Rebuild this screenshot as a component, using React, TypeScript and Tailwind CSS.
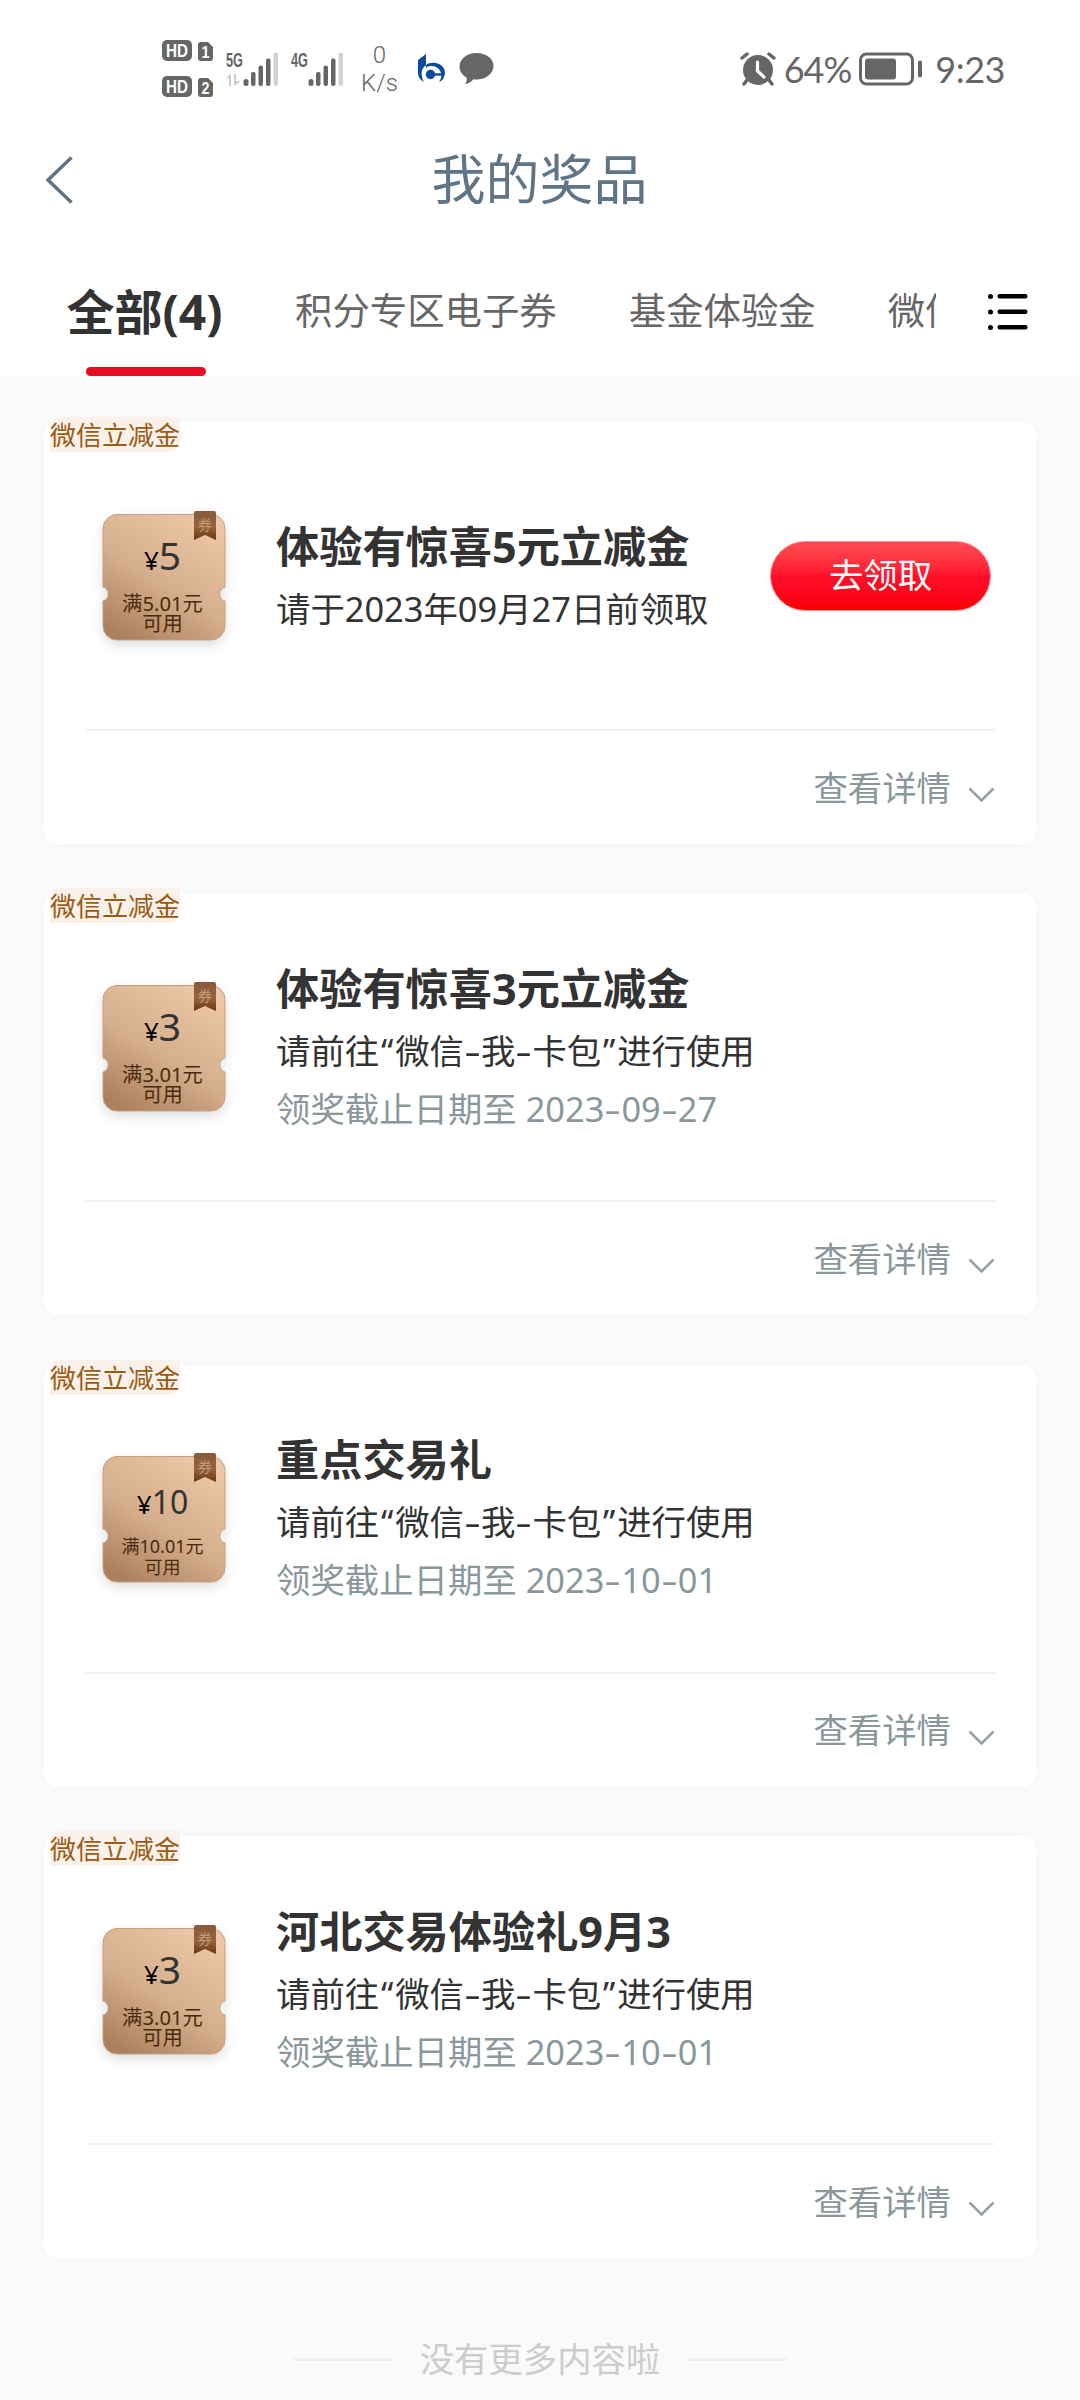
import clsx from 'clsx';

interface Prize {
  title: string;
  desc: string;
  deadline?: string;
  amount: string;
  limit: string;
  small?: boolean;
  claimable?: boolean;
}

const prizes: Prize[] = [
  {
    title: '体验有惊喜5元立减金',
    desc: '请于2023年09月27日前领取',
    amount: '5',
    limit: '满5.01元',
    claimable: true,
  },
  {
    title: '体验有惊喜3元立减金',
    desc: '请前往“微信-我-卡包”进行使用',
    deadline: '领奖截止日期至 2023-09-27',
    amount: '3',
    limit: '满3.01元',
  },
  {
    title: '重点交易礼',
    desc: '请前往“微信-我-卡包”进行使用',
    deadline: '领奖截止日期至 2023-10-01',
    amount: '10',
    limit: '满10.01元',
    small: true,
  },
  {
    title: '河北交易体验礼9月3',
    desc: '请前往“微信-我-卡包”进行使用',
    deadline: '领奖截止日期至 2023-10-01',
    amount: '3',
    limit: '满3.01元',
  },
];

const tabs = ['积分专区电子券', '基金体验金', '微信立减金'];

// Hyphens and quotes take more room than the font gives them
function Spaced({ text }: { text: string }) {
  return (
    <>
      {text.split(/([-“”])/).map((part, i) => {
        if (part === '-') {
          return <span key={i} className="inline-block w-[17px] scale-x-150 text-center">-</span>;
        }
        if (part === '“' || part === '”') {
          return <span key={i} className="inline-block w-[16px] text-center">{part}</span>;
        }
        return part;
      })}
    </>
  );
}

function SimBadges() {
  return (
    <svg className="overflow-visible" width="52" height="58" viewBox="0 0 52 58" fill="#666" fontFamily="'Liberation Sans', sans-serif" fontWeight="bold">
      {[0, 36].map((y, i) => (
        <g key={y} transform={`translate(0 ${y})`}>
          <rect x="0" y="0" width="30" height="21" rx="5" />
          <text x="4" y="17" fontSize="18" fill="#fff" textLength="22" lengthAdjust="spacingAndGlyphs">HD</text>
          <path d="M39 2h7l5 5v11a3 3 0 0 1-3 3h-9a3 3 0 0 1-3-3V5a3 3 0 0 1 3-3z" />
          <text x="39.5" y="18" fontSize="17" fill="#fff" textLength="8" lengthAdjust="spacingAndGlyphs">{i + 1}</text>
        </g>
      ))}
    </svg>
  );
}

function Signal({ label, arrows }: { label: string; arrows?: boolean }) {
  return (
    <svg className="overflow-visible" width="53" height="34" viewBox="0 0 53 34" fill="#666">
      <text x="0" y="15" fontSize="21" fontWeight="bold" fontFamily="'Liberation Sans', sans-serif" textLength={17} lengthAdjust="spacingAndGlyphs">{label}</text>
      {arrows && <path d="M0 26.500l5-5V34H3v-7.500zM8 22h2v7h5l-7 5z" fill="#ccc" />}
      <rect x="17.500" y="27" width="5" height="7" rx="2.500" />
      <rect x="25" y="20" width="4.500" height="14" rx="2" />
      <rect x="32.500" y="13.500" width="4.500" height="20.500" rx="2" />
      <rect x="40" y="6.500" width="4.500" height="27.500" rx="2" />
      <rect x="47.500" y="0.500" width="4.500" height="33.500" rx="2" fill="#d2d2d2" />
    </svg>
  );
}

function StatusBar() {
  return (
    <div className="flex h-[137px] items-center pr-[75px] pl-[162px] text-[#666]">
      <SimBadges />
      <div className="ml-[12px] flex gap-[12px]">
        <Signal label="5G" arrows />
        <Signal label="4G" />
      </div>
      <div className="ml-[17px] flex flex-col items-center font-[Roboto] text-[24px] leading-[28px] font-light">
        <span>0</span>
        <span>K/s</span>
      </div>
      <svg className="ml-[20px]" width="28" height="30" viewBox="0 0 28 30" fill="#0e4a9b">
        <path d="M0 6L8 0v11C4 14 3 18 4 22c0 3 1 4 2 6-4-2-6-5-6-9z" />
        <path d="M8 11c3-3 10-3 14-.5 5 3 6 8 4 12.500-1 3-3 4-5 5 2-3 3-6 2-9-1-4-5-7-9-7-3 0-5 .5-6 2z" />
        <circle cx="12.500" cy="20.500" r="4.700" />
        <path d="M14 19.300h12v2.400H14z" />
      </svg>
      <svg className="ml-[13px]" width="35" height="33" viewBox="0 0 35 33" fill="#666">
        <path d="M17.500 1C27 1 34.500 6.500 34.500 14S27 27.500 17.500 27.500c-1 0-2 0-3-.2-2 2.500-5 4.500-8.500 4.700 1.500-2 2-4 1.500-6.500C3 23 .5 19 .5 14.500.5 7 8 1 17.500 1z" />
      </svg>
      <div className="ml-auto flex items-center font-[Lato] text-[36px] leading-none">
        <svg width="36" height="34" viewBox="0 0 36 34" fill="none" stroke="#666" strokeLinecap="round">
          <circle cx="18" cy="18" r="15" fill="#666" stroke="none" />
          <path d="M2 6l5-4M34 6l-5-4M7 28l-3 4M29 28l3 4" strokeWidth="3.500" />
          <path d="M17.500 10v9l6.500 6" stroke="#fff" strokeWidth="3.200" />
        </svg>
        <span className="ml-[8px] tracking-[-1px]">64%</span>
        <svg className="ml-[8px]" width="64" height="34" viewBox="0 0 64 34" fill="#666">
          <rect x="1.500" y="2" width="52" height="30" rx="6" fill="none" stroke="#666" strokeWidth="3" />
          <rect x="6" y="6.500" width="31" height="21" rx="3" />
          <rect x="59" y="8.500" width="4" height="17" rx="2" />
        </svg>
        <span className="ml-[12px] tracking-[-0.5px]">9:23</span>
      </div>
    </div>
  );
}

function Ticket({ prize, id }: { prize: Prize; id: number }) {
  const { small } = prize;
  return (
    <div className="relative h-[130px] w-[124px] shrink-0">
      <svg className="absolute top-0 left-0 overflow-visible drop-shadow-[0_5px_6px_rgba(0,0,0,0.12)]" width="124" height="130" viewBox="0 0 124 130">
        <defs>
          <linearGradient id={`body${id}`} x1="0.800" y1="0" x2="0.200" y2="1">
            <stop offset="0" stopColor="#edc7a7" />
            <stop offset="0.550" stopColor="#d5ae8d" />
            <stop offset="1" stopColor="#ac805d" />
          </linearGradient>
          <linearGradient id={`ribbon${id}`} x1="0" y1="0" x2="0" y2="1">
            <stop offset="0" stopColor="#87593a" />
            <stop offset="0.550" stopColor="#95653f" />
            <stop offset="1" stopColor="#6b3508" />
          </linearGradient>
        </defs>
        <path
          d="M15 3.500h94a14 14 0 0 1 14 14V76a7.300 7.300 0 0 0 0 14v25a14 14 0 0 1-14 14H15a14 14 0 0 1-14-14V90a7.300 7.300 0 0 0 0-14V17.500a14 14 0 0 1 14-14z"
          fill={`url(#body${id})`}
          stroke="#c4a083"
        />
        <path d="M92 2q0-2 2-2h18q2 0 2 2v27l-11-5-11 5z" fill={`url(#ribbon${id})`} />
        <text x="103" y="19" textAnchor="middle" fontSize="14" fill="#c79b79" fontFamily="'Noto Sans CJK SC', sans-serif">券</text>
      </svg>
      <div className="relative flex flex-col items-center pr-[3px]">
        <div className={clsx('flex items-baseline text-[#333]', small ? 'mt-[31px] h-[48px] text-[32px] leading-[35px]' : 'mt-[22px] h-[59px] text-[39px] leading-[44px]')}>
          <span className="text-[26px] text-black">¥</span>
          <span>{prize.amount}</span>
        </div>
        <div className={clsx('text-center text-[#4a2a0c]', small ? 'mt-[4px] text-[18px] leading-[21px]' : 'mt-px text-[20.3px] leading-[20.5px]')}>
          <div>{prize.limit}</div>
          <div>可用</div>
        </div>
      </div>
    </div>
  );
}

function PrizeCard({ prize, id }: { prize: Prize; id: number }) {
  return (
    <div className="relative h-[422px] rounded-[14px] bg-white pr-[41px] pl-[42px] shadow-[0_0_14px_rgba(0,0,0,0.025)]">
      <span className="absolute top-[-5px] left-[6px] rounded-tl-[12px] rounded-br-[12px] bg-[#f9f1ea] pt-px text-[26px] leading-[34px] text-[#9a5b13]">
        微信立减金
      </span>
      <div className="flex h-[309px] items-center border-b-2 border-[#f1f1f1] pl-[16px]">
        <Ticket prize={prize} id={id} />
        <div className="ml-[50px] text-[34.4px] leading-[58px] whitespace-nowrap text-[#333]">
          <h2 className="text-[43.200px] leading-[66px] font-bold">{prize.title}</h2>
          <p><Spaced text={prize.desc} /></p>
          {prize.deadline && <p className="text-[#8a979b]"><Spaced text={prize.deadline} /></p>}
        </div>
        {prize.claimable && (
          <button className="mr-[4px] ml-auto h-[70px] w-[221px] rounded-full border border-[#ff8a8f] bg-linear-to-b from-[#ff4a54] via-[#ff0e2a] to-[#f80000] text-[34.4px] leading-none text-white">
            去领取
          </button>
        )}
      </div>
      <div className="flex h-[113px] items-center justify-end text-[34.4px] text-[#8a979b]">
        <span>查看详情</span>
        <svg className="mt-[15px] ml-[17px]" width="27" height="16" viewBox="0 0 27 16" fill="none" stroke="#94a0a4" strokeWidth="2.500">
          <path d="M1.500 1.500l12 12 12-12" />
        </svg>
      </div>
    </div>
  );
}

export default function App() {
  return (
    <div className="h-[2400px] w-[1080px] overflow-hidden bg-[#fafafa] font-['Noto_Sans','Noto_Sans_CJK_SC',sans-serif]">
      <header className="h-[376px] bg-white">
        <StatusBar />
        <div className="flex h-[86px] items-center px-[46px]">
          <svg width="27" height="48" viewBox="0 0 27 48" fill="none" stroke="#5f7485" strokeWidth="3.500">
            <path d="M25.500 1.500L2 24l23.500 22.500" />
          </svg>
          <h1 className="mr-[28px] flex-1 pb-[2px] text-center text-[54px] leading-none text-[#5f7485]">我的奖品</h1>
        </div>
        <nav className="flex h-[153px] items-end pl-[30px]">
          <div className="flex w-[906px] overflow-hidden whitespace-nowrap">
            <div className="flex h-[126px] w-[229px] shrink-0 flex-col items-center justify-between">
              <span className="mt-[24px] text-[48px] leading-[76px] font-bold text-[#333]">全部(4)</span>
              <span className="ml-[2px] h-[9px] w-[120px] rounded-full bg-[#e60c23]" />
            </div>
            {tabs.map((tab) => (
              <span key={tab} className="mt-[25px] shrink-0 px-[36px] text-[37.4px] leading-[72px] text-[#666]">
                {tab}
              </span>
            ))}
          </div>
          <svg className="mb-[45px] ml-[52px]" width="41" height="38" viewBox="0 0 41 38" fill="#000">
            {[1, 16.500, 32].map((y) => (
              <g key={y}>
                <rect x="0" y={y} width="5" height="5" rx="2.500" />
                <rect x="9.500" y={y} width="30" height="4.500" rx="2" />
              </g>
            ))}
          </svg>
        </nav>
      </header>
      <main className="flex flex-col gap-[49.4px] px-[44px] pt-[46px]">
        {prizes.map((prize, i) => (
          <PrizeCard key={i} prize={prize} id={i} />
        ))}
      </main>
      <footer className="mt-[75px] flex items-center justify-center gap-[28px] text-[34.4px] leading-[52px] text-[#ccc]">
        <span className="h-[3px] w-[98px] bg-[#eee]" />
        <span>没有更多内容啦</span>
        <span className="h-[3px] w-[98px] bg-[#eee]" />
      </footer>
    </div>
  );
}
